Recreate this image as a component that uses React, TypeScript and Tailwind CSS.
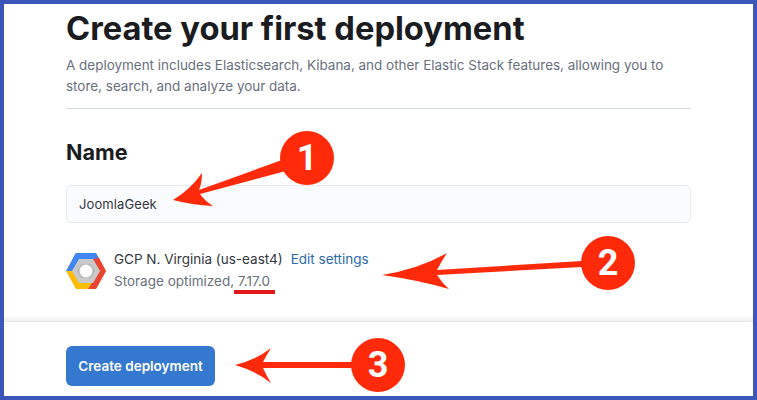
export default function App() {
  return (
    <div className="relative w-[757px] h-[400px] overflow-hidden bg-white border-4 border-[#3b57b9] font-['Inter',sans-serif] flex flex-col">
      <div className="h-[318px] pl-[62px] pr-[62px] shadow-[inset_0_-8px_8px_-8px_rgba(0,0,0,0.12)] border-b border-[#e6e6e6]">
        <h1 className="mt-[2px] text-[32.7px] leading-[44px] font-bold text-[#1a1c21]">Create your first deployment</h1>
        <p className="mt-[5px] text-[13.46px] leading-[21px] text-[#69707d]">
          A deployment includes Elasticsearch, Kibana, and other Elastic Stack features, allowing you to
          <br />
          store, search, and analyze your data.
        </p>
        <div className="mt-[11px] h-px bg-[#d3dae6]" />
        <h2 className="mt-[27px] text-[21.6px] leading-[32px] font-bold text-[#1a1c21]">Name</h2>
        <div className="mt-[17px] h-[38px] flex items-center pt-[2px] px-[12px] bg-[#fafbfd] border border-[#e8e9ec] rounded-[6px] text-[13px] tracking-[0.1px] text-[#343741]">
          JoomlaGeek
        </div>
        <div className="mt-[27px] flex items-center gap-[8px]">
          <GcpLogo />
          <div className="text-[13.5px] leading-[22px] -mt-[2px]">
            <div className="flex gap-[8px]">
              <span className="text-[#343741]">GCP N. Virginia (us-east4)</span>
              <span className="text-[#2a6ba8]">Edit settings</span>
            </div>
            <div className="text-[#69707d]">Storage optimized, 7.17.0</div>
          </div>
        </div>
      </div>
      <div className="flex-1 pl-[62px] pt-[24px]">
        <button className="h-[40px] w-[149px] rounded-[6px] bg-[#3578d0] text-white text-[13.5px] font-semibold">
          Create deployment
        </button>
      </div>

      {/* annotations, coordinates are relative to the framed area */}
      <svg className="absolute left-[-4px] top-[-4px]" width="757" height="400" viewBox="0 0 757 400">
        <rect x="234" y="290" width="41" height="4" fill="#e01a1a" />
        <path d="M173 200 Q191 189 202 173 Q202 183 199 190 L282 160 L286 171 L200 194 Q205 201 213 206 Q192 205 173 200 Z" fill="#ff2a0a" />
        <path d="M382 275 Q419 269 447 253 Q441 262 437 270 L582 261 L582 267 L437 275 Q442 283 449 289 Q418 280 382 275 Z" fill="#ff2a0a" />
        <path d="M235 365 Q256 360 271 348 Q266 356 263 362 L353 362 L353 368 L263 368 Q266 375 271 383 Q256 371 235 365 Z" fill="#ff2a0a" />
      </svg>
      <Badge n="1" className="left-[276px] top-[127px]" />
      <Badge n="2" className="left-[577px] top-[232px]" />
      <Badge n="3" className="left-[347px] top-[334px]" />
    </div>
  );
}

function Badge({ n, className }: { n: string; className: string }) {
  return (
    <div className={`absolute w-[54px] h-[54px] rounded-full bg-[#ff2a0a] text-white text-[36px] font-bold flex items-center justify-center font-['Roboto',sans-serif] ${className}`}>
      {n}
    </div>
  );
}

function GcpLogo() {
  return (
    <svg width="40" height="38" viewBox="0 0 40 38">
      <path d="M10 1 H30 L40 19 L30 37 H10 L0 19 Z" fill="#fbbc05" />
      <path d="M10 1 H30 L34 8 H6 Z" fill="#4285f4" />
      <path d="M10 1 L0 19 L6 19 L14 7 Z" fill="#4285f4" />
      <path d="M26 7 L33 6 L40 19 L30 37 L22 37 L34 19 Z" fill="#ea4335" />
      <path d="M13 7 H27 L34 19 L27 31 H13 L6 19 Z" fill="#c9c9c9" />
      <path d="M15.5 12 H24.5 L29 19 L24.5 26 H15.5 L11 19 Z" fill="#b4b4b4" />
      <circle cx="20" cy="19" r="6.5" fill="#ffffff" />
    </svg>
  );
}
